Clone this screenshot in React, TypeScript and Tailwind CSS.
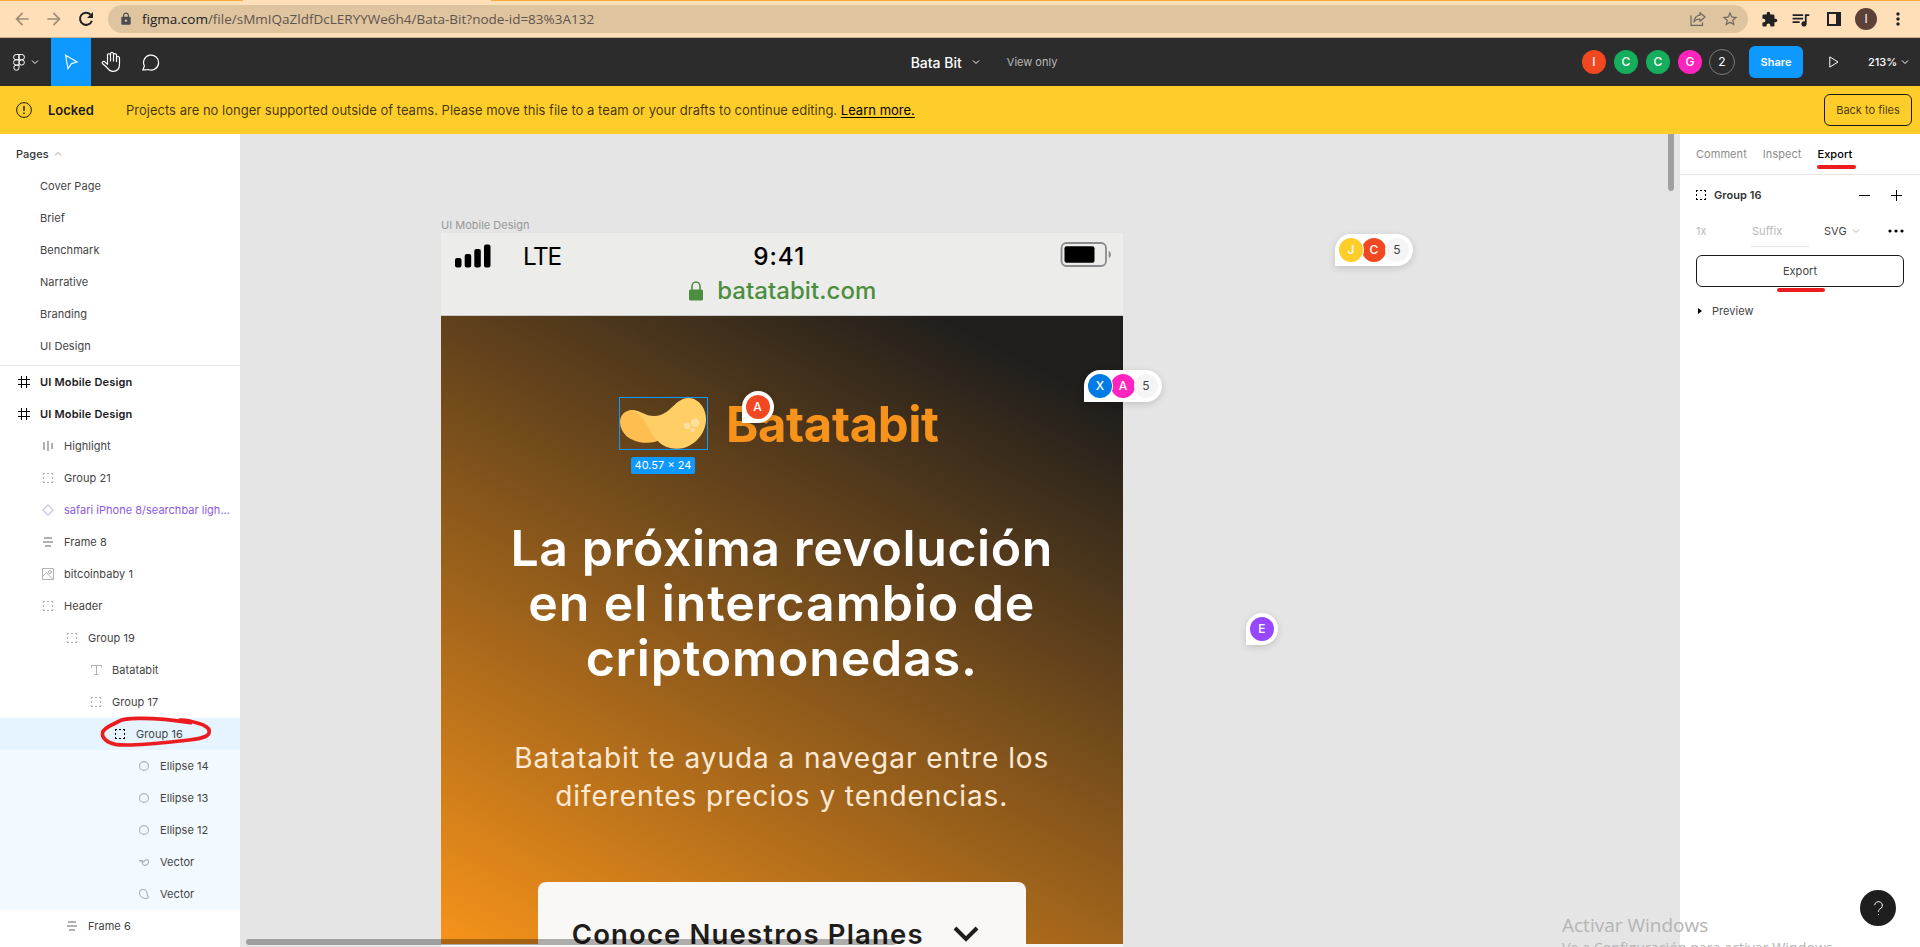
import type { ReactNode } from 'react'
import {
  MdArrowBack,
  MdArrowForward,
  MdExtension,
  MdLock,
  MdMoreVert,
  MdQueueMusic,
  MdStarBorder,
} from 'react-icons/md'

function Chevron({ className = '', up = false }: { className?: string; up?: boolean }) {
  return (
    <svg width="8" height="8" viewBox="0 0 8 8" fill="none" stroke="currentColor" className={className}>
      <path d={up ? 'M1 5.5 4 2.5 7 5.5' : 'M1 2.5 4 5.5 7 2.5'} />
    </svg>
  )
}

function GroupIcon() {
  return (
    <svg width="10" height="10" viewBox="0 0 10 10" fill="none" stroke="currentColor">
      <path d="M0 .5H2M4 .5H6M8 .5H10M0 9.5H2M4 9.5H6M8 9.5H10M.5 0V2M.5 4V6M.5 8V10M9.5 0V2M9.5 4V6M9.5 8V10" />
    </svg>
  )
}

type IconName = 'frame' | 'cols' | 'group' | 'component' | 'rows' | 'image' | 'text' | 'ellipse' | 'vectorA' | 'vectorB'

const icons: Record<IconName, ReactNode> = {
  frame: (
    <svg width="12" height="12" viewBox="0 0 12 12" fill="none" stroke="currentColor">
      <path d="M3.5 0V12M8.5 0V12M0 3.5H12M0 8.5H12" />
    </svg>
  ),
  cols: (
    <svg width="10" height="10" viewBox="0 0 10 10" fill="currentColor">
      <path d="M0 1H2V9H0zM4 0H6V10H4zM8 2H10V8H8z" />
    </svg>
  ),
  group: <GroupIcon />,
  component: (
    <svg width="12" height="12" viewBox="0 0 12 12" fill="none" stroke="currentColor" strokeWidth="1.3">
      <path d="M6 .9 11.1 6 6 11.1.9 6z" />
    </svg>
  ),
  rows: (
    <svg width="10" height="10" viewBox="0 0 10 10" fill="currentColor">
      <path d="M1 0H9V2H1zM0 4H10V6H0zM2 8H8V10H2z" />
    </svg>
  ),
  image: (
    <svg width="12" height="12" viewBox="0 0 12 12" fill="none" stroke="currentColor">
      <path d="M.5.5H11.5V11.5H.5zM.5 8.5 4.300 4.700 11 11.300" />
      <circle cx="8" cy="4" r="1.5" />
    </svg>
  ),
  text: (
    <svg width="11" height="10" viewBox="0 0 11 10" fill="none" stroke="currentColor">
      <path d="M.5 2.5V.5H10.5V2.5M5.5 .5V9.5M3.5 9.5H7.5" />
    </svg>
  ),
  ellipse: (
    <svg width="10" height="10" viewBox="0 0 10 10" fill="none" stroke="currentColor" strokeWidth="1.1">
      <circle cx="5" cy="5" r="4.4" />
    </svg>
  ),
  vectorA: (
    <svg width="10" height="7" viewBox="0 0 10 7" fill="none" stroke="currentColor" strokeWidth="1.1">
      <path d="M0 1.500H3.500L4.700 3C5.500 1.500 7 .5 8.500.6 9.500.8 9.700 2.500 9.200 4 8.500 5.800 6.500 6.600 5 6.200 3.500 5.700 3.200 4.500 3.600 3.200 3 3.200 1.500 2.500 1 1.500" />
    </svg>
  ),
  vectorB: (
    <svg width="10" height="10" viewBox="0 0 10 10" fill="none" stroke="currentColor" strokeWidth="1.1">
      <path d="M2.500.7C4 .3 6 .6 7.200 2 8.200 3.300 8 5 8.600 6.500 9 7.500 9.700 8.200 9.200 8.700 8 9.500 5.500 9.600 3.500 8.700 1.500 7.800.3 5.500.6 3.300.8 2 1.500 1 2.500.7z" />
    </svg>
  ),
}

type Layer = {
  label: string
  icon: IconName
  indent: string
  tone?: 'root' | 'component' | 'selected' | 'child'
}

const layers: Layer[] = [
  { label: 'UI Mobile Design', icon: 'frame', indent: 'pl-4', tone: 'root' },
  { label: 'UI Mobile Design', icon: 'frame', indent: 'pl-4', tone: 'root' },
  { label: 'Highlight', icon: 'cols', indent: 'pl-10' },
  { label: 'Group 21', icon: 'group', indent: 'pl-10' },
  { label: 'safari iPhone 8/searchbar ligh...', icon: 'component', indent: 'pl-10', tone: 'component' },
  { label: 'Frame 8', icon: 'rows', indent: 'pl-10' },
  { label: 'bitcoinbaby 1', icon: 'image', indent: 'pl-10' },
  { label: 'Header', icon: 'group', indent: 'pl-10' },
  { label: 'Group 19', icon: 'group', indent: 'pl-16' },
  { label: 'Batatabit', icon: 'text', indent: 'pl-[88px]' },
  { label: 'Group 17', icon: 'group', indent: 'pl-[88px]' },
  { label: 'Group 16', icon: 'group', indent: 'pl-[112px]', tone: 'selected' },
  { label: 'Ellipse 14', icon: 'ellipse', indent: 'pl-[136px]', tone: 'child' },
  { label: 'Ellipse 13', icon: 'ellipse', indent: 'pl-[136px]', tone: 'child' },
  { label: 'Ellipse 12', icon: 'ellipse', indent: 'pl-[136px]', tone: 'child' },
  { label: 'Vector', icon: 'vectorA', indent: 'pl-[136px]', tone: 'child' },
  { label: 'Vector', icon: 'vectorB', indent: 'pl-[136px]', tone: 'child' },
  { label: 'Frame 6', icon: 'rows', indent: 'pl-16' },
]

const pages = ['Cover Page', 'Brief', 'Benchmark', 'Narrative', 'Branding', 'UI Design']

function LayerRow({ label, icon, indent, tone }: Layer) {
  const bg = tone === 'selected' ? 'bg-[#e5f4ff]' : tone === 'child' ? 'bg-[#f2f9ff]' : ''
  const iconColor =
    tone === 'root' || tone === 'selected' ? 'text-black' : tone === 'component' ? 'text-[#cdc5e6]' : 'text-[#b0b1b3]'
  const textColor =
    tone === 'root'
      ? 'font-semibold tracking-[0.18px] text-[#1a1a1a]'
      : tone === 'component'
        ? 'tracking-[0.02px] text-[#8a5be0]'
        : 'text-[#444]'
  return (
    <div className={`flex h-8 shrink-0 items-center gap-2 ${indent} ${bg}`}>
      <span className={`flex w-4 justify-center ${iconColor}`}>{icons[icon]}</span>
      <span className={`whitespace-nowrap ${textColor}`}>{label}</span>
    </div>
  )
}

function BrowserBar() {
  return (
    <div className="flex h-[38px] shrink-0 flex-col border-b border-[#c9ae8e] bg-[#ffdfb8] tracking-normal">
      <div className="flex h-px justify-between">
        <div className="w-[243px] bg-[#ffab40]" />
        <div className="w-[1429px] bg-[#ffab40]" />
      </div>
      <div className="flex flex-1 items-center pl-3">
        <MdArrowBack className="size-5 text-[#a08d76]" />
        <MdArrowForward className="ml-3 size-5 text-[#a08d76]" />
        <svg width="20" height="20" viewBox="0 0 20 20" fill="none" stroke="#202124" className="ml-3">
          <path d="M14.600 5.600A6.100 6.100 0 1 0 15.900 11.700" strokeWidth="2" />
          <path d="M17 3V9H11z" fill="#202124" stroke="none" />
        </svg>
        <div className="ml-3 flex h-7 w-[1640px] items-center rounded-full bg-[#dfc4a0] pr-[9px] pl-[11px] font-['Open_Sans',sans-serif] text-[13.5px]">
          <MdLock className="size-[14px] text-[#4a4c50]" />
          <span className="ml-[9px] flex-1 text-[#5e564c]">
            <span className="text-[#202124]">figma.com</span>/file/sMmIQaZldfDcLERYYWe6h4/Bata-Bit?node-id=83%3A132
          </span>
          <svg width="16" height="16" viewBox="0 0 16 16" fill="none" stroke="#6e675e" strokeWidth="1.200">
            <path d="M1 4.500V14.300H12.500V11.500" />
            <path
              d="M10 1.700 15 6 10 10.300V8C7 8 5.300 8.900 4 11 4.300 7.500 6 4.600 10 4.200z"
              strokeLinejoin="round"
            />
          </svg>
          <MdStarBorder className="ml-[15px] size-[18px] text-[#6e675e]" />
        </div>
        <MdExtension className="ml-[13px] size-[17px] text-[#202124]" />
        <MdQueueMusic className="ml-3 size-[21px] text-[#202124]" />
        <span className="ml-4 h-[14px] w-[14px] border-[2px] border-r-[5px] border-[#202124]" />
        <span className="ml-[14px] flex size-[22px] items-center justify-center rounded-full bg-[#5d4037] text-[12px] text-white">
          I
        </span>
        <MdMoreVert className="ml-[11px] size-5 text-[#202124]" />
      </div>
    </div>
  )
}

function Avatar({ letter, color }: { letter: string; color: string }) {
  return (
    <span
      className={`flex size-6 shrink-0 items-center justify-center rounded-full text-[12px] font-medium text-white ${color}`}
    >
      {letter}
    </span>
  )
}

function Toolbar() {
  return (
    <div className="flex h-12 shrink-0 items-center justify-between bg-[#2c2c2c] tracking-normal text-white">
      <div className="flex h-full items-center">
        <div className="flex h-full w-[51px] items-center gap-[6px] pl-[13px]">
          <svg width="12" height="17" viewBox="0 0 12 17" fill="none" stroke="currentColor">
            <path d="M6 .5H3.200A2.600 2.600 0 0 0 3.200 5.800H6zM6 .5H8.800A2.600 2.600 0 0 1 8.800 5.800H6zM6 5.800H3.200A2.600 2.600 0 0 0 3.200 11.100H6zM3.200 11.100A2.600 2.600 0 1 0 6 13.700V11.100z" />
            <circle cx="8.700" cy="8.450" r="2.650" />
          </svg>
          <Chevron />
        </div>
        <div className="flex h-full w-10 items-center justify-center bg-[#0d99ff]">
          <svg width="14" height="16" viewBox="0 0 14 16" fill="none" stroke="currentColor" strokeWidth="1.100">
            <path d="M1.500 1.200 13.200 8 7.500 9.600 4 14.600z" />
          </svg>
        </div>
        <div className="flex h-full w-10 items-center justify-center">
          <svg
            width="20"
            height="20"
            viewBox="0 0 20 20"
            fill="none"
            stroke="currentColor"
            strokeWidth="1.200"
            strokeLinejoin="round"
            strokeLinecap="round"
          >
            <path d="M6.500 12V3.500A1.500 1.500 0 0 1 9.500 3V9M9.500 3V2A1.500 1.500 0 0 1 12.500 2V9M12.500 3A1.500 1.500 0 0 1 15.500 3.500V9.500M15.500 6A1.500 1.500 0 0 1 18.500 6V12C18.500 16.500 16 19.400 12 19.400 8.500 19.400 7.500 17.500 6 15.500L1.400 11.500C.8 10.500 2 9 3.500 9.600L6.500 12.300" />
          </svg>
        </div>
        <div className="flex h-full w-10 items-center justify-center">
          <svg width="18" height="17" viewBox="0 0 18 17" fill="none" stroke="currentColor" strokeWidth="1.200">
            <path d="M.8 15.900 2.400 12A7.500 7.500 0 1 1 6.200 15.500C5 15.900 3 16 .8 15.900z" strokeLinejoin="round" />
          </svg>
        </div>
      </div>
      <div className="ml-[215px] flex items-center">
        <span className="text-[14px] font-medium">Bata Bit</span>
        <Chevron className="ml-[10px]" />
        <span className="ml-[27px] text-[#b9b9b9]">View only</span>
      </div>
      <div className="flex items-center">
        <div className="flex items-center gap-2">
          <Avatar letter="I" color="bg-[#f24822]" />
          <Avatar letter="C" color="bg-[#14ae5c]" />
          <Avatar letter="C" color="bg-[#14ae5c]" />
          <Avatar letter="G" color="bg-[#ff24bd]" />
          <span className="-ml-px flex size-[26px] items-center justify-center rounded-full border border-[#7b7b7b] text-[12px]">
            2
          </span>
        </div>
        <span className="ml-[14px] flex h-8 w-[54px] items-center justify-center rounded-md bg-[#0d99ff] font-semibold">
          Share
        </span>
        <svg width="10" height="12" viewBox="0 0 10 12" fill="none" stroke="currentColor" className="ml-[26px]">
          <path d="M.8.9 9 6 .8 11.100z" />
        </svg>
        <span className="ml-[29px] w-[27px] font-medium">213%</span>
        <Chevron className="mr-[11px] ml-[6px]" />
      </div>
    </div>
  )
}

function Banner() {
  return (
    <div className="flex h-12 shrink-0 items-center bg-[#ffcd29] pr-2 pl-4 text-[13px] tracking-normal text-black/75">
      <svg width="16" height="16" viewBox="0 0 16 16" fill="none" stroke="#1a1a1a">
        <circle cx="8" cy="8" r="7.400" />
        <path d="M8 4V9M8 10.500V12" strokeWidth="1.400" />
      </svg>
      <span className="ml-4 w-[78px] pt-px font-semibold text-[#1a1a1a]">Locked</span>
      <span className="flex-1 pt-px tracking-[0.008px]">
        Projects are no longer supported outside of teams. Please move this file to a team or your drafts to continue
        editing. <span className="text-black underline underline-offset-2">Learn more.</span>
      </span>
      <span className="flex h-8 w-[88px] items-center justify-center rounded-md border border-[#1a1a1a] text-[11px]">
        Back to files
      </span>
    </div>
  )
}

function LeftPanel() {
  return (
    <aside className="relative flex w-60 shrink-0 flex-col overflow-hidden bg-white text-[#444]">
      <div className="flex shrink-0 flex-col border-b border-[#e5e5e5] pt-1 pb-[3px]">
        <div className="flex h-8 items-center gap-[5px] pl-4">
          <span className="font-medium text-[#333]">Pages</span>
          <Chevron up className="text-[#a0a0a0]" />
        </div>
        {pages.map((p) => (
          <div key={p} className="flex h-8 items-center pl-10">
            {p}
          </div>
        ))}
      </div>
      {layers.map((l, i) => (
        <LayerRow key={i} {...l} />
      ))}
      <svg
        className="absolute top-[580px] left-[98px]"
        width="116"
        height="36"
        viewBox="0 0 348 108"
        fill="none"
        stroke="#ea1c1f"
        strokeWidth="11"
        strokeLinecap="round"
        strokeLinejoin="round"
      >
        <path d="M278 26C240 20 170 12 121 13 95 13 75 14 62 22 45 32 18 40 14 55 10 72 28 86 52 91 90 98 200 86 245 81 285 76 322 75 332 60 340 42 318 33 300 28 285 23 265 17 246 18L272 24" />
      </svg>
    </aside>
  )
}

function CursorPill({ place, items, extra }: { place: string; items: [string, string][]; extra?: string }) {
  return (
    <div
      className={`absolute flex h-8 items-center rounded-2xl rounded-bl-none bg-white px-1 shadow-[0_2px_7px_rgba(0,0,0,0.15)] ${place}`}
    >
      {items.map(([letter, color], i) => (
        <span
          key={letter}
          className={`flex size-6 items-center justify-center rounded-full text-[12px] font-medium text-white ${color} ${i === 0 && items.length > 1 ? 'relative z-10 ring-1 ring-white' : ''} ${i > 0 ? '-ml-px' : ''}`}
        >
          {letter}
        </span>
      ))}
      {extra && (
        <span className="-ml-px flex size-6 items-center justify-center rounded-full bg-[#f5f5f5] text-[12px] text-[#444]">
          {extra}
        </span>
      )}
    </div>
  )
}

function Potato() {
  return (
    <svg width="87" height="51" viewBox="60 57 261 153">
      <path
        fill="#ffbf50"
        d="M60 130C60 108 75 93 97 93 135 95 165 150 174 185 160 191 145 191 130 191 90 188 62 165 60 130z"
      />
      <path
        fill="#ffcf66"
        d="M88 95C122 90 130 111 163 111 212 110 225 57 265 57 297 57 320 90 318 125 315 170 275 209 232 209 197 209 172 192 157 165 143 140 125 99 88 95z"
      />
      <g fill="#ffe0a0">
        <circle cx="285" cy="131" r="12.500" />
        <circle cx="261" cy="141" r="9.500" />
        <circle cx="278" cy="153" r="7" />
      </g>
    </svg>
  )
}

function PhoneFrame() {
  return (
    <div className="absolute top-[99px] left-[201px] flex h-[760px] w-[681.5px] flex-col bg-[#f5f5f5]">
      <div className="flex h-[711px] shrink-0 flex-col bg-[linear-gradient(207.8deg,#201e1c_16.69%,#f7931a_100%)]">
        <div className="flex h-[83px] shrink-0 flex-col border-b border-[#c9c8c7] bg-[#ececeb] text-black">
          <div className="mt-[9px] grid h-[27px] grid-cols-3 items-center text-[24.3px] leading-[27px]">
            <div className="flex items-center pl-[14px]">
              <svg width="36" height="24" viewBox="0 0 36 24" className="mb-px">
                <rect x="0" y="14" width="6.500" height="9.500" rx="2" />
                <rect x="9.700" y="10" width="6.500" height="13.500" rx="2" />
                <rect x="19.300" y="5" width="6.500" height="18.500" rx="2" />
                <rect x="29" y="0.500" width="6.500" height="23" rx="2" />
              </svg>
              <span className="ml-[32px] tracking-[-1.300px]">LTE</span>
            </div>
            <span className="pr-[5px] text-center font-medium tracking-[1px]">9:41</span>
            <svg width="52" height="25" viewBox="0 0 52 25" className="mr-[11px] mb-[3px] justify-self-end">
              <rect x="1.500" y="1" width="44.500" height="23" rx="5" fill="none" stroke="#8b8b8d" strokeWidth="1.800" />
              <rect x="4.500" y="4.300" width="30" height="16.400" rx="2" />
              <path fill="#8b8b8d" d="M48.700 9C51.600 9.800 51.600 15.200 48.700 16z" />
            </svg>
          </div>
          <div className="mt-2 flex h-7 items-center justify-center pl-[2px] text-[24px] leading-7 text-[#4b8e3f]">
            <svg width="14" height="20" viewBox="0 0 14 20" className="mr-[14px] mb-px">
              <rect y="8.500" width="14" height="11" rx="1.500" fill="currentColor" />
              <path d="M3 9V5.500A4 4.500 0 0 1 11 5.500V9" fill="none" stroke="currentColor" strokeWidth="1.600" />
            </svg>
            <span className="font-medium tracking-[0.050px]">batatabit.com</span>
          </div>
        </div>
        <div className="mt-[81px] flex h-[53px] shrink-0 pl-[178px]">
          <div className="relative flex h-[53px] w-[89px] items-center justify-center border border-[#0d99ff]">
            <Potato />
            <span className="absolute top-[59px] left-[11px] flex h-[17px] w-16 items-center justify-center rounded-xs bg-[#0d99ff] text-[11px] tracking-[0px] text-white">
              40.57 × 24
            </span>
          </div>
          <span className="ml-[18px] text-[49px] leading-[55px] font-bold tracking-[-0.400px] text-[#f7931a]">
            Batatabit
          </span>
        </div>
        <h1 className="mt-[71px] flex shrink-0 flex-col items-center text-[50px] leading-[55px] font-semibold text-white">
          <span className="tracking-[0.600px]">La próxima revolución</span>
          <span className="tracking-[0.920px]">en el intercambio de</span>
          <span className="tracking-[0.850px]">criptomonedas.</span>
        </h1>
        <p className="mt-[53px] shrink-0 text-center text-[28px] leading-[38.300px] tracking-[0.940px] text-[#ffe9d5]">
          Batatabit te ayuda a navegar entre los
          <br />
          diferentes precios y tendencias.
        </p>
        <div className="mx-auto mt-[66px] flex h-[84px] w-[488px] shrink-0 items-start rounded-t-lg bg-[#faf8f7] pt-8 pl-[34px]">
          <span className="w-[352px] text-[27.500px] leading-10 font-semibold tracking-[1.150px] whitespace-nowrap text-[#201e1c]">
            Conoce Nuestros Planes
          </span>
          <svg
            width="26"
            height="16"
            viewBox="0 0 26 16"
            fill="none"
            stroke="#201e1c"
            strokeWidth="4"
            className="mt-3 ml-[29px]"
          >
            <path d="M2 2 13 13 24 2" />
          </svg>
        </div>
      </div>
    </div>
  )
}

function Canvas() {
  return (
    <main className="relative w-[1440px] shrink-0 overflow-hidden bg-[#e5e5e5]">
      <span className="absolute top-[84px] left-[201px] leading-[14px] tracking-normal text-[#999]">UI Mobile Design</span>
      <PhoneFrame />
      <CursorPill place="top-[257px] left-[501.500px]" items={[['A', 'bg-[#f24822]']]} />
      <CursorPill place="top-[236px] left-[844px]" items={[['X', 'bg-[#007be5]'], ['A', 'bg-[#ff24bd]']]} extra="5" />
      <CursorPill place="top-[100px] left-[1095px]" items={[['J', 'bg-[#ffcd29]'], ['C', 'bg-[#f24822]']]} extra="5" />
      <CursorPill place="top-[479px] left-[1006px]" items={[['E', 'bg-[#9747ff]']]} />
      <div className="absolute top-0 left-[1428px] h-[57px] w-[6px] rounded-b-full bg-black/30" />
      <div className="absolute top-[805px] left-[6px] h-[6px] w-[650px] rounded-full bg-black/30" />
    </main>
  )
}

function RightPanel() {
  return (
    <aside className="relative flex w-60 shrink-0 flex-col bg-white text-[#444]">
      <div className="flex h-[41px] items-center gap-4 border-b border-[#e5e5e5] pl-4 text-[#8c8c8c]">
        <span>Comment</span>
        <span>Inspect</span>
        <span className="font-medium text-black">Export</span>
      </div>
      <div className="flex h-10 items-center pr-[18px] pl-4 text-black">
        <GroupIcon />
        <span className="ml-2 flex-1 font-semibold text-[#333]">Group 16</span>
        <svg width="43" height="11" viewBox="0 0 43 11" stroke="currentColor" fill="none">
          <path d="M0 5.500H11M32 5.500H43M37.500 0V11" />
        </svg>
      </div>
      <div className="flex h-8 items-center pr-4 pl-4">
        <span className="w-[55px] text-[#b8b8b8]">1x</span>
        <span className="flex h-[29px] w-[58px] items-center self-end border-b border-[#e5e5e5] pb-[2px] pl-px text-[#b8b8b8]">
          Suffix
        </span>
        <span className="ml-[15px]">SVG</span>
        <Chevron className="ml-[5px] text-[#b0b0b0]" />
        <svg width="16" height="4" viewBox="0 0 16 4" className="ml-auto" fill="#000">
          <circle cx="2" cy="2" r="1.600" />
          <circle cx="8" cy="2" r="1.600" />
          <circle cx="14" cy="2" r="1.600" />
        </svg>
      </div>
      <div className="mx-4 mt-2 flex h-8 items-center justify-center rounded-md border border-[#1a1a1a]">Export</div>
      <div className="mt-2 flex h-8 items-center pl-[18px]">
        <svg width="4" height="6" viewBox="0 0 4 6">
          <path d="M0 0 4 3 0 6z" />
        </svg>
        <span className="ml-[10px]">Preview</span>
      </div>
      <div className="absolute top-[31px] left-[137px] h-1 w-[39px] rounded-full bg-[#ea1c1f]" />
      <div className="absolute top-[154px] left-[97px] h-1 w-[48px] rounded-full bg-[#ea1c1f]" />
      <div className="absolute right-6 bottom-[21px] flex size-9 items-center justify-center rounded-full bg-[#1e1e1e]">
        <svg width="9" height="15" viewBox="0 0 9 15" fill="none" stroke="#fff">
          <path d="M.6 4.200A3.900 3.700 0 1 1 6.900 7.300C5.300 8.300 4.500 8.900 4.500 10.800M4.500 13V14.200" />
        </svg>
      </div>
    </aside>
  )
}

export default function App() {
  return (
    <div className="relative flex h-[947px] w-[1920px] flex-col overflow-hidden font-['Inter',sans-serif] text-[11px] tracking-[0.055px]">
      <BrowserBar />
      <Toolbar />
      <Banner />
      <div className="flex min-h-0 flex-1">
        <LeftPanel />
        <Canvas />
        <RightPanel />
      </div>
      <div className="absolute top-[912px] left-[1562px] font-['Open_Sans',sans-serif] tracking-normal whitespace-nowrap text-[#b4b4b4]">
        <div className="text-[19px] leading-[26px]">Activar Windows</div>
        <div className="text-[14.250px] leading-5">Ve a Configuración para activar Windows.</div>
      </div>
    </div>
  )
}
